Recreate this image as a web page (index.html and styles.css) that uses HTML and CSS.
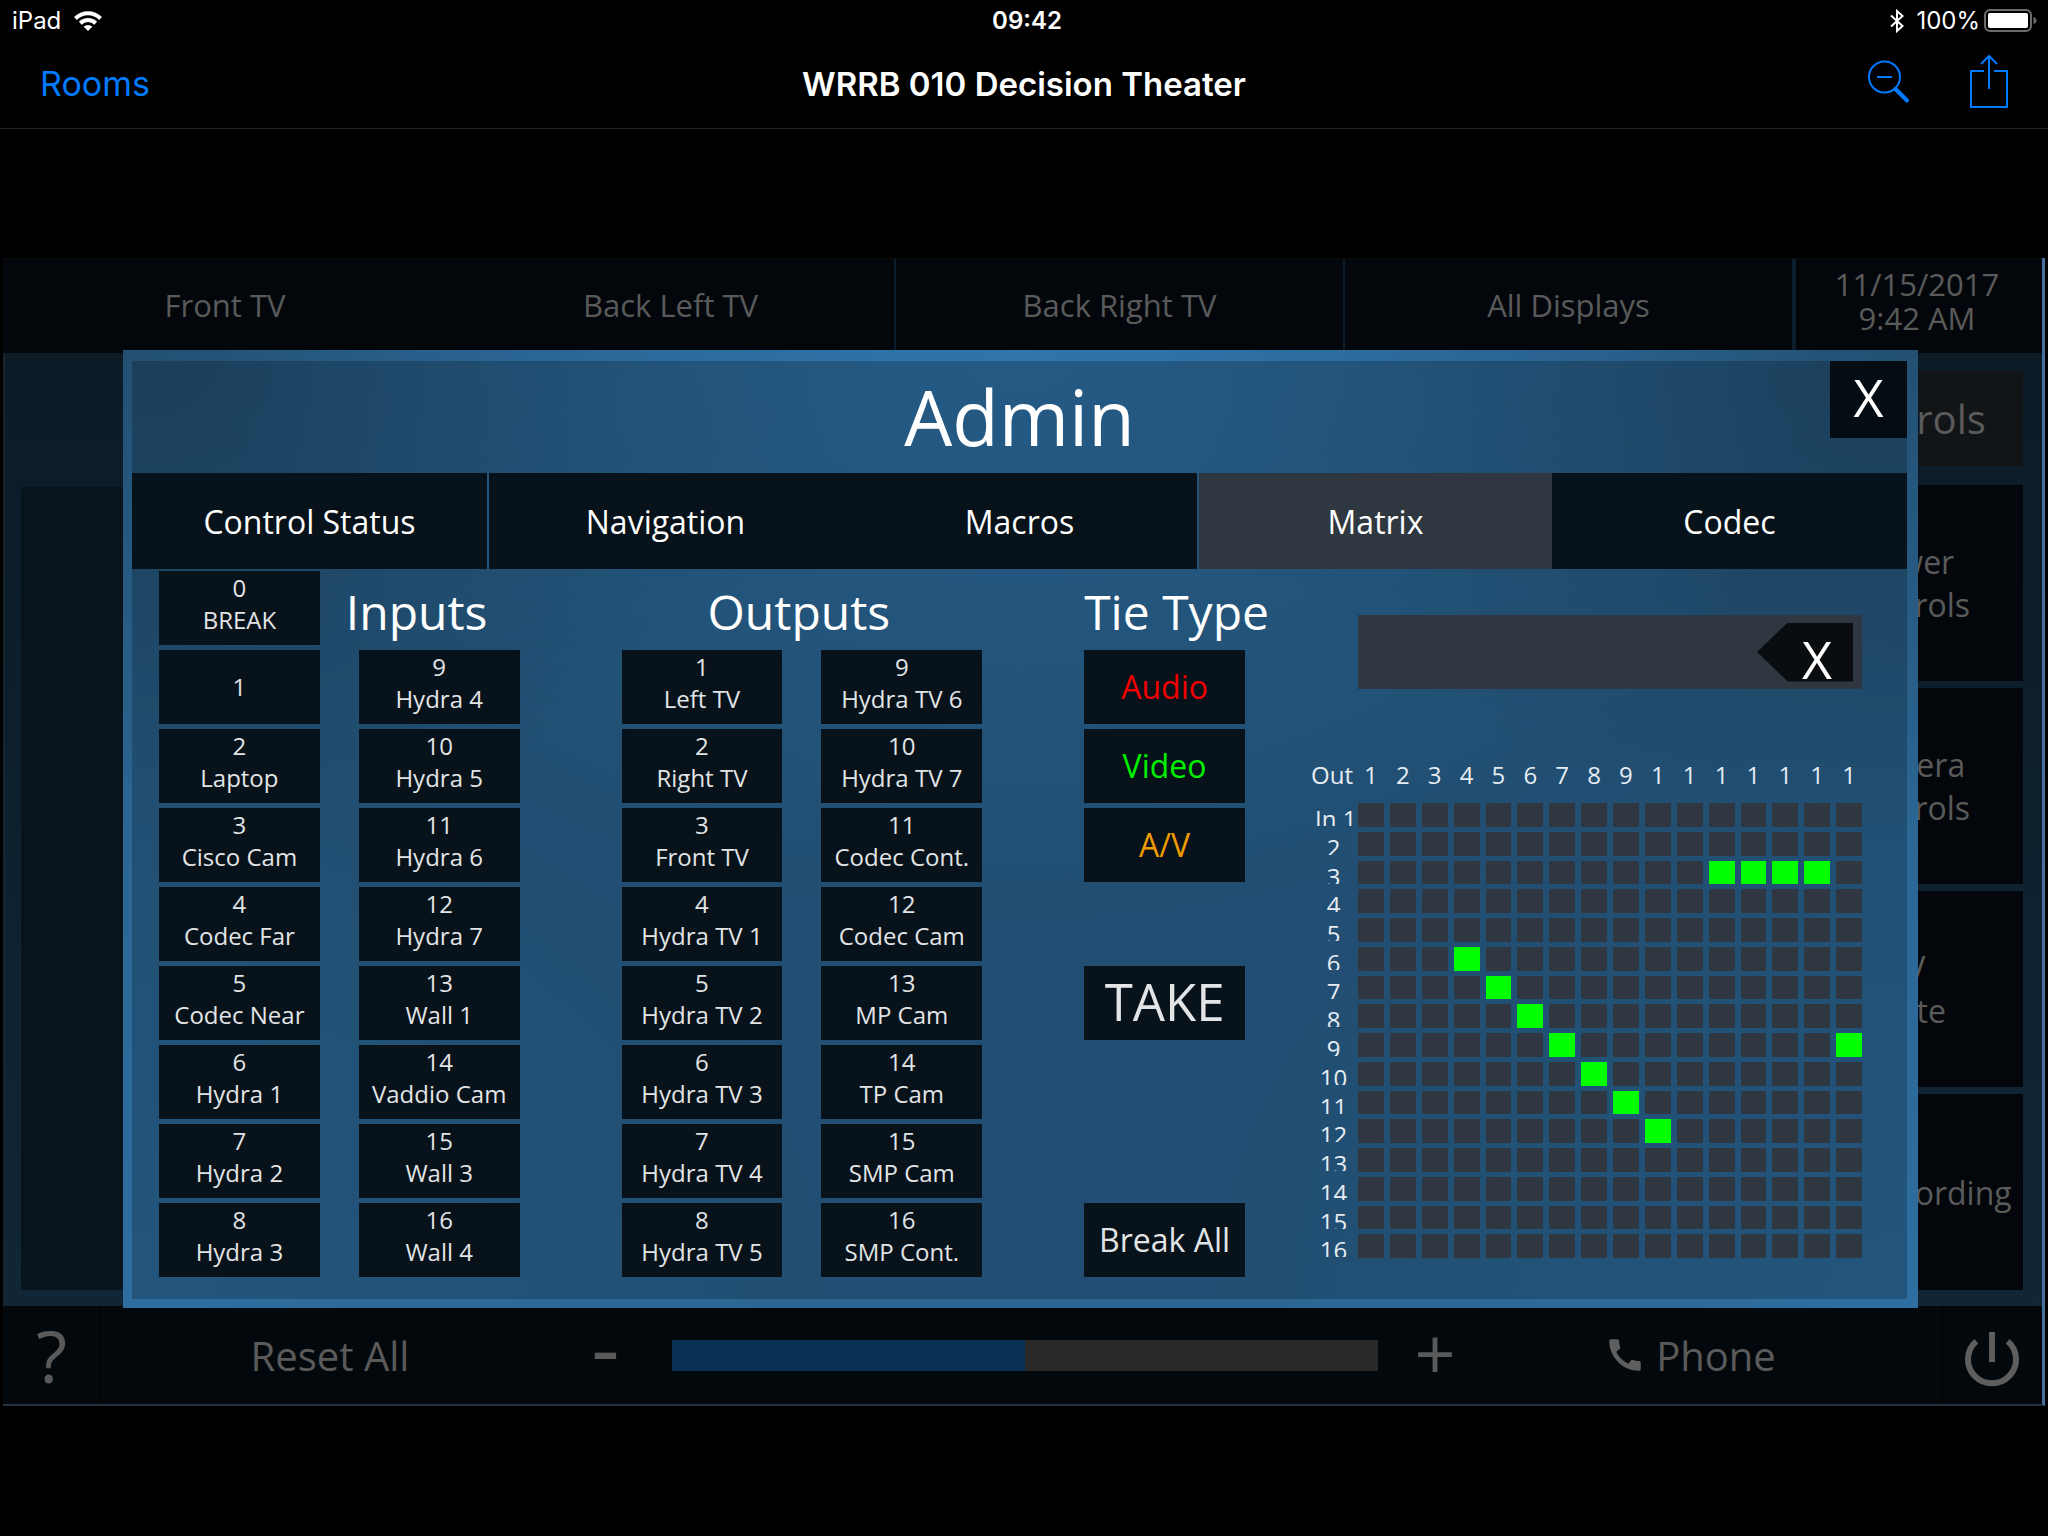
FILE: index.html
```html
<!DOCTYPE html>
<html lang="en">
<head>
<meta charset="utf-8">
<title>WRRB 010 Decision Theater</title>
<link rel="stylesheet" href="styles.css">
</head>
<body>
<div class="status">
  <div class="status-left">
    <span>iPad</span>
    <svg class="wifi" width="28" height="20" viewBox="0 0 28 20" fill="none" stroke="#fff" stroke-width="4" aria-hidden="true">
      <path d="M1.500 7.500a17.700 17.700 0 0 1 25 0"/>
      <path d="M6.300 12.200a11 11 0 0 1 15.400 0"/>
      <path d="M14 20l-4.300-4.300a6.200 6.200 0 0 1 8.600 0z" fill="#fff" stroke="none"/>
    </svg>
  </div>
  <div class="status-time">09:42</div>
  <div class="status-right">
    <svg width="14" height="24" viewBox="0 0 14 24" fill="none" stroke="#fff" stroke-width="2" aria-hidden="true">
      <path d="M1 6.500l11.500 10.500L7 22V2l5.500 5L1 17.500"/>
    </svg>
    <span class="percent">100%</span>
    <svg width="54" height="24" viewBox="0 0 54 24" aria-hidden="true">
      <rect x="1" y="1" width="46" height="21" rx="5" fill="none" stroke="#6c6c6c" stroke-width="2"/>
      <rect x="4" y="4" width="40" height="15" rx="2" fill="#fff"/>
      <path d="M49.500 8c4 1 4 6 0 7z" fill="#6c6c6c"/>
    </svg>
  </div>
</div>
<header class="navbar">
  <a class="back" href="#rooms">Rooms</a>
  <h1 class="page-title">WRRB 010 Decision Theater</h1>
  <div class="nav-actions">
    <button class="icon-button" type="button" aria-label="Zoom out">
      <svg width="42" height="56" viewBox="0 0 42 56" fill="none" stroke="#007aff" stroke-width="2">
        <circle cx="16.500" cy="23" r="15.500"/><path d="M9 23h15"/>
        <path d="M27.500 35l11.500 11.500" stroke-width="4" stroke-linecap="round"/>
      </svg>
    </button>
    <button class="icon-button" type="button" aria-label="Share">
      <svg width="38" height="56" viewBox="0 0 38 56" fill="none" stroke="#007aff" stroke-width="2">
        <path d="M14 17H1v36h36V17H24M19 35V2M11 10l8-8 8 8"/>
      </svg>
    </button>
  </div>
</header>

<main class="stage">
  <div class="topbar">
    <button class="display" type="button">Front TV</button>
    <button class="display" type="button">Back Left TV</button>
    <button class="display divided" type="button">Back Right TV</button>
    <button class="display divided" type="button">All Displays</button>
    <div class="clock">11/15/2017<br>9:42 AM</div>
  </div>

  <div class="room">
    <div class="preview"></div>
    <aside class="side">
      <h2 class="side-title">Controls</h2>
      <button class="side-button" type="button">Power<br>Controls</button>
      <button class="side-button" type="button">Camera<br>Controls</button>
      <button class="side-button" type="button">TV<br>Mute</button>
      <button class="side-button" type="button">A/V Recording</button>
    </aside>
  </div>

  <div class="footer">
    <button class="foot help" type="button">?</button>
    <button class="foot" type="button">Reset All</button>
    <button class="foot minus" type="button">-</button>
    <input class="volume" type="range" min="0" max="100" value="50" aria-label="Volume">
    <button class="foot plus" type="button">+</button>
    <button class="foot phone" type="button">
      <svg width="42" height="42" viewBox="0 0 24 24" fill="#5e5e5e" aria-hidden="true">
        <path d="M20.010 15.380c-1.230 0-2.420-.2-3.530-.56-.35-.12-.74-.03-1.010.24l-1.570 1.970c-2.830-1.350-5.480-3.900-6.890-6.830l1.950-1.660c.27-.28.35-.67.24-1.020-.37-1.110-.56-2.300-.56-3.530 0-.54-.45-.99-.99-.99H4.190C3.650 3 3 3.240 3 3.990 3 13.280 10.730 21 20.010 21c.71 0 .99-.63.99-1.180v-3.450c0-.54-.45-.99-.99-.99z"/>
      </svg>
      <span>Phone</span>
    </button>
    <button class="foot power" type="button" aria-label="Power">
      <svg width="56" height="56" viewBox="0 0 56 56" fill="none" stroke="#5e5e5e" stroke-width="6">
        <path d="M28 1v30M12.300 10.200a24 24 0 1 0 31.400 0"/>
      </svg>
    </button>
  </div>

  <section class="modal" role="dialog" aria-labelledby="admin-title">
    <div class="modal-inner">
      <div class="modal-head">
        <h2 class="modal-title" id="admin-title">Admin</h2>
        <button class="close" type="button">X</button>
      </div>
      <nav class="tabs">
        <button class="tab" type="button">Control Status</button>
        <button class="tab ruled" type="button">Navigation</button>
        <button class="tab" type="button">Macros</button>
        <button class="tab ruled active" type="button">Matrix</button>
        <button class="tab" type="button">Codec</button>
      </nav>
      <div class="modal-body">
        <div class="groups">
          <div class="group">
            <button class="key" type="button"><span class="lines">0<br>BREAK</span></button>
            <h3 class="heading heading-inputs">Inputs</h3>
            <button class="key" type="button">1</button>
            <button class="key" type="button"><span class="lines">9<br>Hydra 4</span></button>
            <button class="key" type="button"><span class="lines">2<br>Laptop</span></button>
            <button class="key" type="button"><span class="lines">10<br>Hydra 5</span></button>
            <button class="key" type="button"><span class="lines">3<br>Cisco Cam</span></button>
            <button class="key" type="button"><span class="lines">11<br>Hydra 6</span></button>
            <button class="key" type="button"><span class="lines">4<br>Codec Far</span></button>
            <button class="key" type="button"><span class="lines">12<br>Hydra 7</span></button>
            <button class="key" type="button"><span class="lines">5<br>Codec Near</span></button>
            <button class="key" type="button"><span class="lines">13<br>Wall 1</span></button>
            <button class="key" type="button"><span class="lines">6<br>Hydra 1</span></button>
            <button class="key" type="button"><span class="lines">14<br>Vaddio Cam</span></button>
            <button class="key" type="button"><span class="lines">7<br>Hydra 2</span></button>
            <button class="key" type="button"><span class="lines">15<br>Wall 3</span></button>
            <button class="key" type="button"><span class="lines">8<br>Hydra 3</span></button>
            <button class="key" type="button"><span class="lines">16<br>Wall 4</span></button>
          </div>
          <div class="group">
            <h3 class="heading heading-outputs">Outputs</h3>
            <button class="key" type="button"><span class="lines">1<br>Left TV</span></button>
            <button class="key" type="button"><span class="lines">9<br>Hydra TV 6</span></button>
            <button class="key" type="button"><span class="lines">2<br>Right TV</span></button>
            <button class="key" type="button"><span class="lines">10<br>Hydra TV 7</span></button>
            <button class="key" type="button"><span class="lines">3<br>Front TV</span></button>
            <button class="key" type="button"><span class="lines">11<br>Codec Cont.</span></button>
            <button class="key" type="button"><span class="lines">4<br>Hydra TV 1</span></button>
            <button class="key" type="button"><span class="lines">12<br>Codec Cam</span></button>
            <button class="key" type="button"><span class="lines">5<br>Hydra TV 2</span></button>
            <button class="key" type="button"><span class="lines">13<br>MP Cam</span></button>
            <button class="key" type="button"><span class="lines">6<br>Hydra TV 3</span></button>
            <button class="key" type="button"><span class="lines">14<br>TP Cam</span></button>
            <button class="key" type="button"><span class="lines">7<br>Hydra TV 4</span></button>
            <button class="key" type="button"><span class="lines">15<br>SMP Cam</span></button>
            <button class="key" type="button"><span class="lines">8<br>Hydra TV 5</span></button>
            <button class="key" type="button"><span class="lines">16<br>SMP Cont.</span></button>
          </div>
          <div class="group ties">
            <h3 class="heading">Tie Type</h3>
            <button class="key tie audio" type="button">Audio</button>
            <button class="key tie video" type="button">Video</button>
            <button class="key tie av" type="button">A/V</button>
            <button class="key take" type="button">TAKE</button>
            <button class="key tie break-all" type="button">Break All</button>
          </div>
        </div>
        <div class="routing">
          <div class="entry">
            <input class="entry-field" type="text" aria-label="Selection">
            <button class="erase" type="button">X</button>
          </div>
          <table class="matrix">
            <thead><tr id="outs"><th scope="col">Out</th></tr></thead>
            <tbody id="ins"></tbody>
          </table>
        </div>
      </div>
    </div>
  </section>
</main>
<script src="matrix.js"></script>
</body>
</html>
```

FILE: matrix.js
```js
// Output numbers tied to each input; column heads show one digit only.
const ties = { 3: [12, 13, 14, 15], 6: [4], 7: [5], 8: [6], 9: [7, 16], 10: [8], 11: [9], 12: [10] };
const outs = document.getElementById('outs');
const ins = document.getElementById('ins');

for (let o = 1; o <= 16; o++) {
  const th = document.createElement('th');
  th.scope = 'col';
  th.textContent = String(o)[0];
  outs.append(th);
}

for (let i = 1; i <= 16; i++) {
  const row = document.createElement('tr');
  const th = document.createElement('th');
  th.scope = 'row';
  th.textContent = i === 1 ? 'In 1' : i;
  row.append(th);
  for (let o = 1; o <= 16; o++) {
    const td = document.createElement('td');
    if ((ties[i] || []).includes(o)) td.className = 'tied';
    row.append(td);
  }
  ins.append(row);
}
```

FILE: styles.css
```css
* { box-sizing: border-box; }
body {
  margin: 0;
  min-height: 100vh;
  background: #000;
  color: #fff;
  font-family: "Open Sans", "Noto Sans", sans-serif;
}
button {
  margin: 0;
  padding: 0;
  border: 0;
  background: none;
  color: inherit;
  font: inherit;
}
h1, h2, h3 { margin: 0; font-weight: 400; }

/* iPad chrome */
.status, .navbar {
  display: grid;
  grid-template-columns: 1fr auto 1fr;
  align-items: center;
  font-family: Inter, "Liberation Sans", sans-serif;
}
.status { height: 40px; padding: 2px 10px 0 12px; font-size: 24px; line-height: 30px; }
.status-left, .status-right { display: flex; align-items: center; }
.status-left { gap: 13px; }
.status-right { justify-content: flex-end; }
.percent { margin: 0 4px 0 12px; }
.status-time { padding-left: 4px; font-weight: 600; }
.navbar { height: 89px; padding: 0 40px; border-bottom: 1px solid #262628; }
.back { color: #007aff; font-size: 34px; line-height: 40px; text-decoration: none; }
.page-title { font-size: 33px; font-weight: 600; line-height: 40px; }
.nav-actions { display: flex; justify-content: flex-end; gap: 60px; padding-bottom: 4px; }
.icon-button { display: flex; }

/* Room panel behind the dialog */
.stage {
  position: relative;
  margin: 129px 3px 0;
  border-right: 3px solid #466f9c;
  border-bottom: 2px solid #25303d;
  background: linear-gradient(#0b1a25, #112738);
  color: #5a5a5a;
}
.topbar {
  display: grid;
  grid-template-columns: 444fr 447fr 449fr 449fr 250fr;
  height: 95px;
  background: #03070b;
  border-top: 1px solid #0b0b0b;
  font-size: 31px;
  line-height: 34px;
}
.display { padding-bottom: 2px; }
.divided { border-left: 2px solid #0b1c2b; }
.clock {
  display: flex;
  align-items: center;
  justify-content: center;
  padding: 0 4px 10px 0;
  border-left: 4px solid #0c1e2e;
  text-align: center;
}
.room { display: flex; gap: 20px; padding: 17px 19px 16px 16px; border-left: 2px solid #16242f; }
.preview { flex: 1; margin-top: 117px; background: #08141c; }
.side { display: flex; flex-direction: column; gap: 7px; width: 232px; }
.side-title {
  height: 96px;
  margin-bottom: 12px;
  background: #121517;
  font-size: 40px;
  line-height: 98px;
  text-align: center;
}
.side-button { height: 196px; background: #03070b; font-size: 32px; line-height: 43px; white-space: nowrap; }
.footer {
  display: grid;
  grid-template-columns: 98px 458fr 113px 706fr 114px 450fr 100px;
  align-items: center;
  height: 98px;
  background: #03080c;
}
.foot { display: flex; align-items: center; justify-content: center; height: 98px; font-size: 40px; }
.help { border-right: 1px solid #000; font-size: 72px; }
.minus { padding: 0 20px 20px 0; font-size: 88px; }
.plus { padding-bottom: 6px; font-size: 72px; }
.phone { gap: 10px; padding-right: 54px; }
.power { padding: 8px 2px 0 0; border-left: 1px solid #000; }
.volume {
  appearance: none;
  width: 100%;
  height: 31px;
  margin: 0;
  background: linear-gradient(90deg, #0a3154 50%, #292929 50%);
}
.volume::-webkit-slider-thumb { appearance: none; width: 1px; height: 1px; }

/* Admin dialog */
.modal {
  position: absolute;
  top: 92px;
  left: 120px;
  right: 124px;
  padding: 11px 11px 9px 9px;
  background:
    radial-gradient(ellipse 45% 60% at 50% 0%, rgba(49, 120, 178, 0.8), transparent),
    radial-gradient(ellipse 40% 60% at 0% 100%, rgba(46, 113, 166, 0.7), transparent),
    radial-gradient(ellipse 40% 60% at 100% 100%, rgba(46, 113, 166, 0.7), transparent),
    radial-gradient(ellipse 40% 50% at 0% 0%, rgba(34, 78, 112, 0.9), transparent),
    radial-gradient(ellipse 40% 50% at 100% 0%, rgba(34, 78, 112, 0.9), transparent),
    #2b6592;
  color: #fff;
}
.modal-inner { background: rgba(0, 0, 0, 0.22); }
.modal-head { position: relative; height: 112px; }
.modal-title { font-size: 76px; line-height: 112px; text-align: center; }
.close {
  position: absolute;
  top: 0;
  right: 0;
  width: 77px;
  height: 77px;
  padding-bottom: 5px;
  background: #050d14;
  font-size: 52px;
  line-height: 72px;
}
.tabs { display: grid; grid-template-columns: repeat(5, 1fr); height: 96px; }
.tab { background: #07121a; font-size: 32px; }
.active { background: #2f3840; }
.ruled { border-left: 2px solid #22547c; }
.modal-body { display: flex; gap: 66px; padding: 2px 45px 22px 27px; }
.groups {
  display: grid;
  grid-template-columns: minmax(0, 361fr) minmax(0, 361fr) minmax(0, 161fr);
  gap: 102px;
  flex: 1086;
  min-width: 0;
}
.group {
  display: grid;
  grid-template-columns: minmax(0, 1fr) minmax(0, 1fr);
  grid-template-rows: repeat(9, 74px);
  gap: 5px 39px;
}
.key { background: #07121a; color: #e2e4e6; font-size: 24px; line-height: 32px; }
.lines { display: block; padding-bottom: 8px; }
.heading { padding-top: 4px; font-size: 48px; line-height: 74px; white-space: nowrap; }
.heading-inputs { margin-left: -13px; }
.heading-outputs { grid-column: 1 / -1; padding-right: 6px; text-align: center; }
.ties { grid-template-columns: minmax(0, 1fr); }
.tie { font-size: 32px; }
.audio { color: #f00000; }
.video { color: #00f000; }
.av { color: #f09c00; }
.take { grid-row: 6; padding-bottom: 5px; font-size: 51px; }
.break-all { grid-row: 9; }

.routing { display: flex; flex-direction: column; flex: 551; min-width: 0; padding: 44px 0 19px; }
.entry { display: flex; align-items: center; height: 74px; margin: 0 0 74px 47px; padding-right: 9px; background: #2f3840; }
.entry-field { flex: 1; min-width: 0; height: 74px; border: 0; background: none; color: #fff; font: inherit; font-size: 32px; }
.erase {
  width: 96px;
  height: 59px;
  padding: 12px 0 0 45px;
  background: #0a0d10;
  clip-path: polygon(0 50%, 32% 0, 100% 0, 100% 100%, 32% 100%);
  font-size: 52px;
  line-height: 47px;
  text-align: left;
}
.matrix {
  display: grid;
  grid-template-columns: 41px repeat(16, 1fr);
  grid-template-rows: 35px repeat(16, 1fr);
  gap: 5px 6px;
  flex: 1;
  color: #e6ecf2;
  font-size: 24px;
}
.matrix thead, .matrix tbody, .matrix tr { display: contents; }
.matrix th { padding: 0; font-weight: 400; white-space: nowrap; }
.matrix thead th { line-height: 24px; vertical-align: top; }
.matrix tbody th { height: 23px; padding-left: 4px; overflow: hidden; line-height: 31px; }
.matrix td { padding: 0; background: #2f3840; }
.matrix .tied { background: #0f0; }
```
